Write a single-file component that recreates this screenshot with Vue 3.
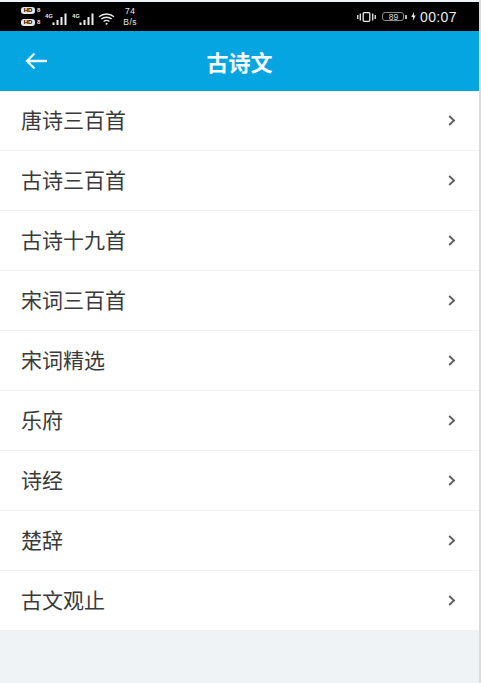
<script setup>
const items = ['唐诗三百首', '古诗三百首', '古诗十九首', '宋词三百首', '宋词精选', '乐府', '诗经', '楚辞', '古文观止']
</script>

<template>
  <div class="page">
    <div class="main">
      <div class="status">
        <div class="left">
          <div class="hd">
            <div class="hd-row"><span class="badge">HD</span><span class="sub">8</span></div>
            <div class="hd-row"><span class="badge">HD</span><span class="sub">8</span></div>
          </div>
          <div class="sig"><span class="g">4G</span>
            <svg width="15" height="12" viewBox="0 0 15 12"><path d="M.5 9.5h2V12h-2zM4.5 7h2v5h-2zM8.5 4h2v8h-2zM12.5 .5h2V12h-2z" fill="#ededed"/></svg>
          </div>
          <div class="sig"><span class="g">4G</span>
            <svg width="15" height="12" viewBox="0 0 15 12"><path d="M.5 9.5h2V12h-2zM4.5 7h2v5h-2zM8.5 4h2v8h-2zM12.5 .5h2V12h-2z" fill="#ededed"/></svg>
          </div>
          <svg class="wifi" width="17" height="12" viewBox="0 0 17 12" fill="none" stroke="#ededed" stroke-width="1.3"><path d="M1 3.7c4.3-3.600 10.700-3.600 15 0M3.300 6.100c3-2.500 7.400-2.500 10.400 0M5.600 8.500c1.700-1.300 4.100-1.300 5.800 0"/><circle cx="8.5" cy="10.8" r="1" fill="#ededed" stroke="none"/></svg>
          <div class="speed"><span>74</span><span>B/s</span></div>
        </div>
        <div class="right">
          <svg class="vib" width="19" height="10" viewBox="0 0 19 10" fill="none" stroke="#ededed" stroke-width="1.3"><rect x="6.200" y=".7" width="6.600" height="8.600" rx="1"/><path d="M3.300 1.500v7M.8 3v4M15.700 1.500v7M18.200 3v4"/></svg>
          <div class="battery"><span class="level">89</span></div>
          <span class="cap"></span>
          <svg width="5" height="9" viewBox="0 0 5 9"><path d="M3 0 .3 5h1.800L1.800 9l2.900-5.400H2.900z" fill="#ededed"/></svg>
          <span class="time">00:07</span>
        </div>
      </div>
      <header class="bar">
        <svg class="back" width="22" height="18" viewBox="0 0 22 18" fill="none" stroke="#e6f7ff" stroke-width="2.3"><path d="M22 9H2M9.500 1.500 2 9l7.500 7.500"/></svg>
        <h1 class="title">古诗文</h1>
      </header>
      <ul class="list">
        <li v-for="item in items" :key="item" class="row">
          <span class="label">{{ item }}</span>
          <svg width="8" height="11" viewBox="0 0 8 11" fill="none" stroke="#5f5f5f" stroke-width="1.9"><path d="M1.200 1 6 5.500 1.200 10"/></svg>
        </li>
      </ul>
    </div>
  </div>
</template>

<style scoped>
.page {
  display: flex;
  height: 683px;
  width: 481px;
  overflow: hidden;
  background: #dcdcdc;
  font-family: "Noto Sans CJK SC", "Liberation Sans", sans-serif;
}
.main {
  width: 479px;
  background: #eff3f6;
  display: flex;
  flex-direction: column;
}
.status {
  height: 29px;
  margin-top: 2px;
  background: #000;
  color: #ededed;
  display: flex;
  align-items: center;
  justify-content: space-between;
  padding: 0 22px 0 21px;
  box-sizing: border-box;
}
.left, .right { display: flex; align-items: center; }
.hd { display: flex; flex-direction: column; gap: 5px; }
.hd-row { display: flex; align-items: center; gap: 2px; height: 7px; }
.badge {
  background: #e8e8e8;
  color: #000;
  font: 700 6px/7px "Liberation Sans", sans-serif;
  width: 14px;
  text-align: center;
  border-radius: 3px;
}
.sub { font: 700 6px/7px "Liberation Sans", sans-serif; }
.sig { display: flex; align-items: flex-start; margin: 4px 0 0 5px; }
.sig + .sig { margin-left: 5px; }
.g { font: 700 5.5px/6px "Liberation Sans", sans-serif; width: 7px; }
.wifi { margin: 4px 0 0 4px; }
.speed {
  display: flex;
  flex-direction: column;
  align-items: center;
  margin-left: 8px;
  font: 8.5px/10.5px "Liberation Sans", sans-serif;
  letter-spacing: .5px;
}
.vib { margin-right: 6px; }
.battery {
  width: 22px;
  height: 9px;
  border: 1px solid #8c8c8c;
  border-radius: 3px;
  box-sizing: border-box;
  display: flex;
  align-items: center;
  justify-content: center;
}
.level { font: 8.5px/8px "Liberation Sans", sans-serif; color: #ddd; }
.cap { width: 1.5px; height: 4px; background: #bbb; margin: 0 4px 0 1px; }
.time {
  font: 14px/16px "Liberation Sans", sans-serif;
  margin-left: 4px;
  letter-spacing: .4px;
}
.bar {
  height: 60px;
  background: #05a5e2;
  display: flex;
  align-items: center;
  justify-content: center;
  position: relative;
}
.back { position: absolute; left: 25px; top: 21px; }
.title {
  margin: 0;
  color: #fff;
  font-size: 22px;
  font-weight: 700;
  line-height: 28px;
}
.list { list-style: none; margin: 0; padding: 0; background: #fff; }
.row {
  height: 60px;
  box-sizing: border-box;
  border-bottom: 1px solid #f1f1f1;
  display: flex;
  align-items: center;
  justify-content: space-between;
  padding: 0 23px 0 21px;
}
.label { font-size: 21px; color: #3a3a3a; line-height: 26px; margin-bottom: 3px; }
</style>
